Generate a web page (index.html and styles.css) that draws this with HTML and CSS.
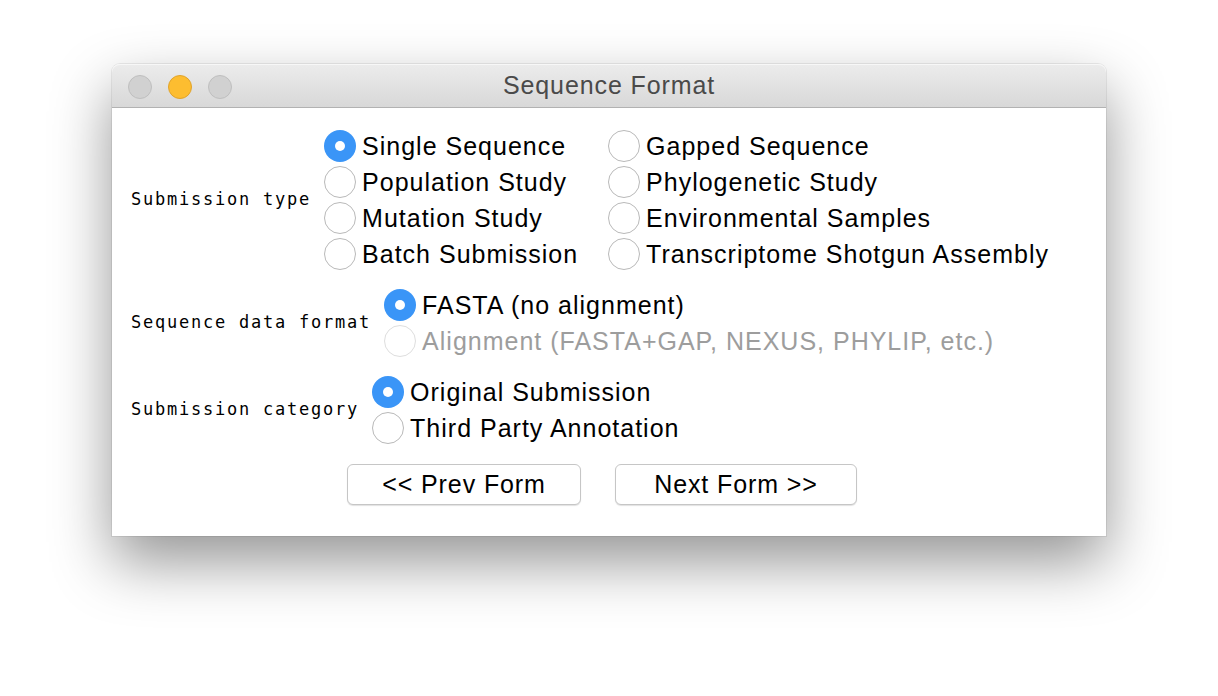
FILE: index.html
```html
<!DOCTYPE html>
<html>
<head>
<meta charset="utf-8">
<link rel="stylesheet" href="styles.css">
</head>
<body>
<div class="window">
  <div class="titlebar">
    <div class="lights">
      <span class="light gray"></span>
      <span class="light yellow"></span>
      <span class="light gray"></span>
    </div>
    <div class="title">Sequence Format</div>
  </div>
  <div class="content">
    <div class="section">
      <div class="label">Submission type</div>
      <div class="grid two">
        <div class="radio"><span class="dot on"></span><span class="txt">Single Sequence</span></div>
        <div class="radio"><span class="dot"></span><span class="txt">Gapped Sequence</span></div>
        <div class="radio"><span class="dot"></span><span class="txt">Population Study</span></div>
        <div class="radio"><span class="dot"></span><span class="txt">Phylogenetic Study</span></div>
        <div class="radio"><span class="dot"></span><span class="txt">Mutation Study</span></div>
        <div class="radio"><span class="dot"></span><span class="txt">Environmental Samples</span></div>
        <div class="radio"><span class="dot"></span><span class="txt">Batch Submission</span></div>
        <div class="radio"><span class="dot"></span><span class="txt">Transcriptome Shotgun Assembly</span></div>
      </div>
    </div>
    <div class="section">
      <div class="label">Sequence data format</div>
      <div class="grid">
        <div class="radio"><span class="dot on"></span><span class="txt">FASTA (no alignment)</span></div>
        <div class="radio disabled"><span class="dot"></span><span class="txt">Alignment (FASTA+GAP, NEXUS, PHYLIP, etc.)</span></div>
      </div>
    </div>
    <div class="section">
      <div class="label">Submission category</div>
      <div class="grid">
        <div class="radio"><span class="dot on"></span><span class="txt">Original Submission</span></div>
        <div class="radio"><span class="dot"></span><span class="txt">Third Party Annotation</span></div>
      </div>
    </div>
    <div class="buttons">
      <button class="btn prev">&lt;&lt; Prev Form</button>
      <button class="btn next">Next Form &gt;&gt;</button>
    </div>
  </div>
</div>
</body>
</html>
```
FILE: styles.css
```css
html, body {
  margin: 0;
  padding: 0;
  background: #ffffff;
}
body {
  min-height: 696px;
  box-sizing: border-box;
  padding: 64px 0 0 112px;
  font-family: "Liberation Sans", Arial, sans-serif;
}
.window {
  width: 994px;
  height: 472px;
  border-radius: 8px 8px 0 0;
  background: #ffffff;
  box-shadow: 0 0 0 1px rgba(0,0,0,0.07), 0 26px 60px rgba(0,0,0,0.42);
  display: flex;
  flex-direction: column;
}
.titlebar {
  height: 43px;
  flex: none;
  position: relative;
  border-radius: 8px 8px 0 0;
  background: linear-gradient(#ececec, #d8d8d8);
  border-bottom: 1px solid #b2b2b2;
  box-shadow: inset 0 1px 0 #f7f7f7;
  display: flex;
  align-items: center;
  justify-content: center;
}
.lights {
  position: absolute;
  left: 16px;
  top: 11px;
  display: flex;
  gap: 16px;
}
.light {
  width: 24px;
  height: 24px;
  border-radius: 50%;
  box-sizing: border-box;
}
.light.gray {
  background: #d1d1d1;
  border: 1px solid #bfbfbf;
}
.light.yellow {
  background: #fdbd30;
  border: 1px solid #e0a32c;
}
.title {
  font-size: 25px;
  letter-spacing: 0.9px;
  color: #4a4a4a;
}
.content {
  flex: 1;
  padding: 20px 0 0 19px;
  display: flex;
  flex-direction: column;
}
.section {
  display: flex;
  align-items: center;
  margin-bottom: 15px;
}
.label {
  font-family: "DejaVu Sans Mono", "Liberation Mono", monospace;
  font-size: 17px;
  letter-spacing: 1.77px;
  color: #000;
  margin-right: 13px;
  margin-bottom: 3px;
  white-space: nowrap;
}
.grid {
  display: grid;
  grid-template-columns: auto;
}
.grid.two {
  grid-template-columns: 284px auto;
}
.radio {
  height: 36px;
  display: flex;
  align-items: center;
  white-space: nowrap;
}
.dot {
  width: 32px;
  height: 32px;
  box-sizing: border-box;
  border-radius: 50%;
  border: 1.5px solid #b9b9b9;
  background: #fff;
  flex: none;
  display: flex;
  align-items: center;
  justify-content: center;
}
.dot.on {
  border: none;
  background: #3a95f7;
}
.dot.on::after {
  content: "";
  width: 10px;
  height: 10px;
  border-radius: 50%;
  background: #fff;
}
.txt {
  margin-left: 6px;
  font-size: 25px;
  letter-spacing: 1px;
  color: #000;
}
.radio.disabled .dot {
  border-color: #dedede;
}
.radio.disabled .txt {
  color: #9d9d9d;
}
.buttons {
  display: flex;
  justify-content: center;
  gap: 34px;
  padding-right: 33px;
  margin-top: 3px;
}
.btn {
  height: 41px;
  box-sizing: border-box;
  background: #fff;
  border: 1px solid #c6c6c6;
  border-radius: 6px;
  box-shadow: 0 1px 1px rgba(0,0,0,0.12);
  font-family: "Liberation Sans", Arial, sans-serif;
  font-size: 25px;
  letter-spacing: 0.9px;
  color: #000;
  padding: 0;
}
.btn.prev { width: 234px; }
.btn.next { width: 242px; }
```
